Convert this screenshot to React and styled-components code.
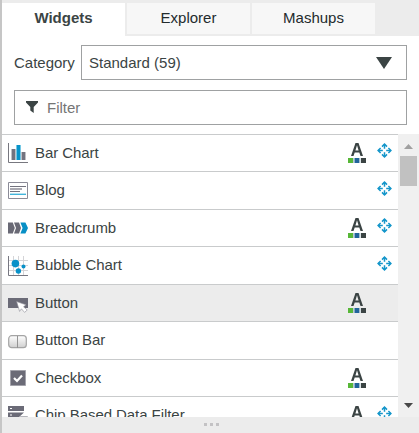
import React from "react";
import styled, { createGlobalStyle } from "styled-components";

const GlobalStyle = createGlobalStyle`
  * { box-sizing: border-box; }
  body { margin: 0; background: #fff; overflow: hidden; }
`;

const Panel = styled.div`
  display: flex;
  flex-direction: column;
  width: 419px;
  height: 433px;
  border-left: 2px solid #c6c6c6;
  background: #fff;
  color: #3b4444;
  font: 15px/20px "Liberation Sans", Arial, sans-serif;
  overflow: hidden;
`;

const TabBar = styled.div`
  display: flex;
  flex: none;
  gap: 2px;
  height: 36px;
  padding-top: 3px;
  background: #ececec;
`;

const Tab = styled.div`
  width: 123px;
  height: ${(p) => (p.$active ? 33 : 31)}px;
  padding-top: 5px;
  text-align: center;
  color: ${(p) => (p.$active ? "#3b4444" : "#232b2d")};
  font-weight: ${(p) => (p.$active ? 700 : 400)};
  background: ${(p) => (p.$active ? "#fff" : "#f7f7f7")};
`;

const Controls = styled.div`
  display: flex;
  flex-direction: column;
  flex: none;
  gap: 10px;
  height: 98px;
  padding: 9px 12px 0 12px;
`;

const CategoryRow = styled.div`
  display: flex;
  align-items: center;
`;

const Label = styled.span`
  width: 67px;
`;

const Field = styled.div`
  display: flex;
  align-items: center;
  flex: 1;
  height: 35px;
  border: 1px solid #9fa1a2;
  background: #fff;
`;

const Select = styled(Field)`
  justify-content: space-between;
  padding: 0 14px 0 7px;
`;

const FilterField = styled(Field)`
  flex: none;
  gap: 9px;
  padding: 0 11px;
  color: #757575;

  svg { margin-top: -2px; }
  span { padding-top: 1px; }
`;

const ListArea = styled.div`
  display: flex;
  flex: none;
  height: 283px;
  overflow: hidden;
`;

const List = styled.div`
  flex: none;
  width: 396px;
`;

const Row = styled.div`
  display: grid;
  grid-template-columns: 20px 1fr 18px 19px;
  column-gap: 7px;
  height: ${(p) => (p.$tall ? 38 : 37)}px;
  padding: 0 6px;
  border-top: 1px solid #c9cbcc;
  background: ${(p) => (p.$selected ? "#ececec" : "#fff")};
`;

const Name = styled.span`
  padding-top: 8px;
  letter-spacing: -0.06px;
  white-space: nowrap;
`;

const IconCell = styled.span`
  display: block;
  height: 20px;
  margin-top: ${(p) => p.$top}px;
  svg { display: block; }
`;

const MarkCell = styled.span`
  margin-top: ${(p) => p.$top}px;
  svg { display: block; }
`;

const MoveCell = styled(MarkCell)`
  margin-left: 4px;
`;

const ScrollBar = styled.div`
  display: flex;
  flex-direction: column;
  align-items: center;
  flex: 1;
  height: 283px;
  padding: 10px 0 9px;
  background: #f0f0f0;
  svg { display: block; flex: none; }
`;

const Thumb = styled.div`
  width: 17px;
  height: 30px;
  margin: 7px 0 auto;
  background: #c1c1c1;
`;

const Footer = styled.div`
  display: flex;
  justify-content: center;
  flex: none;
  gap: 3px;
  height: 16px;
  padding: 6px 0 0 2px;
  background: #ececec;
`;

const Dot = styled.i`
  width: 3px;
  height: 3px;
  background: #c3c2c4;
`;

const BarChart = () => (
  <svg width="20" height="20">
    <path d="M.5 0v19.5H20" fill="none" stroke="#77777f" />
    <path d="M3 6h5v11H3zM13 9h5v8h-5z" fill="#bfc0c5" />
    <path d="M4 6h3v11H4zM14 9h3v8h-3z" fill="#73737f" />
    <path d="M8 2h5v15H8z" fill="#75c8e5" />
    <path d="M9 2h3v15H9z" fill="#0793c9" />
  </svg>
);

const Blog = () => (
  <svg width="20" height="17">
    <path d="M.5.5h19v16H.5z" fill="#fff" stroke="#8b8b97" />
    <path d="M2 4.5h16M2 9.5h10" stroke="#73737f" />
    <path d="M2 7h12" stroke="#aaa9b1" strokeWidth="2" />
    <path d="M2 12.3h16" stroke="#42b5dc" strokeWidth="1.4" />
  </svg>
);

const Breadcrumb = () => (
  <svg width="20" height="12">
    <path d="M0 .5h4.8L6.8 6l-2 5.5H0z" fill="#696975" />
    <path d="M6 .5h5L13 6l-2 5.5H6L8 6z" fill="#696975" />
    <path d="M12.4.5h5L20 6l-2.6 5.5h-5l2.2-5.5z" fill="#078fc5" />
  </svg>
);

const Bubble = () => (
  <svg width="20" height="20">
    <path d="M5.5 0v19M10.5 0v19M15.5 0v19M1 4.5h19M1 9.5h19M1 14.5h19" stroke="#d4d4d7" />
    <path d="M.5 0v19.5H20" fill="none" stroke="#777781" />
    <g fill="#0891c8">
      <circle cx="7.4" cy="7.6" r="3.8" />
      <circle cx="15.5" cy="10.5" r="2" />
      <circle cx="10.4" cy="15" r="2.7" />
    </g>
  </svg>
);

const Cursor = () => (
  <svg width="20" height="15">
    <path d="M0 0h20v10H0z" fill="#6b6b77" />
    <path d="M8.6 3.6l9.4 3.2-2.4 2 3.6 3.2-2.6 2.4-3.2-3.6-1.8 2.6z" fill="#fff" stroke="#8b8b95" strokeWidth=".6" />
  </svg>
);

const ButtonBar = () => (
  <svg width="20" height="14">
    <defs>
      <linearGradient id="metal" x2="0" y2="1">
        <stop offset="0" stopColor="#fff" />
        <stop offset="1" stopColor="#cfcfcf" />
      </linearGradient>
    </defs>
    <rect x=".7" y=".7" width="17.6" height="12" rx="3" fill="url(#metal)" stroke="#a4a4a4" strokeWidth="1.2" />
    <path d="M9.5 1v12" stroke="#949494" />
  </svg>
);

const Checkbox = () => (
  <svg width="20" height="16">
    <path d="M2.5.5h15v15h-15z" fill="#6b6b77" stroke="#a3a3ab" />
    <path d="M6 8l3 3 5-5.5" fill="none" stroke="#fff" strokeWidth="2.2" />
  </svg>
);

const Chips = () => (
  <svg width="20" height="20">
    <path d="M0 0h16v5H0zM0 6.5h16l-6 5.5H0zM0 14h10v5H0z" fill="#6b6b77" />
    <path d="M2 2h2v1H2zM2 8.5h2v1H2z" fill="#fff" />
    <path d="M12 10.5h8l-4 4.5v4h-2v-4z" fill="#6b6b77" />
  </svg>
);

const StyleMark = () => (
  <svg width="18" height="20">
    <path d="M3 13L7.5 0h3L15 13h-2.5l-1.2-3.5H6.7L5.5 13zm4.4-5.6h3.2L9 2.3z" fill="#3b4444" />
    <path d="M0 15h5v5H0z" fill="#57b738" />
    <path d="M6.5 15h5v5h-5z" fill="#22649b" />
    <path d="M13 15h5v5h-5z" fill="#3b4444" />
    <path d="M5.5 15v5M12 15v5" stroke="#b9cbd2" />
  </svg>
);

const Move = () => (
  <svg width="15" height="15">
    <g fill="none" stroke="#1596ca" strokeWidth="1.5">
      <path d="M7.5 1v4.8M7.5 9.2V14M1 7.5h4.8M9.2 7.5H14" />
      <path d="M5 3.6L7.5 1.1 10 3.6M5 11.4l2.5 2.5 2.5-2.5M3.6 5L1.1 7.5 3.6 10M11.4 5l2.5 2.5-2.5 2.5" />
    </g>
  </svg>
);

const Triangle = ({ up }) => (
  <svg width="9" height="5">
    <path d={up ? "M0 5l4.5-5L9 5z" : "M0 0h9L4.5 5z"} fill={up ? "#a0a0a0" : "#484848"} />
  </svg>
);

const widgets = [
  { name: "Bar Chart", Icon: BarChart, top: 8, styled: true, move: true },
  { name: "Blog", Icon: Blog, top: 10, move: true },
  { name: "Breadcrumb", Icon: Breadcrumb, top: 12, styled: true, move: true },
  { name: "Bubble Chart", Icon: Bubble, top: 9, move: true },
  { name: "Button", Icon: Cursor, top: 13, styled: true, selected: true },
  { name: "Button Bar", Icon: ButtonBar, top: 13 },
  { name: "Checkbox", Icon: Checkbox, top: 10, styled: true },
  { name: "Chip Based Data Filter", Icon: Chips, top: 9, styled: true, move: true },
];

export default function App() {
  return (
    <>
      <GlobalStyle />
      <Panel>
        <TabBar>
          <Tab $active>Widgets</Tab>
          <Tab>Explorer</Tab>
          <Tab>Mashups</Tab>
        </TabBar>
        <Controls>
          <CategoryRow>
            <Label>Category</Label>
            <Select>
              <span>Standard (59)</span>
              <svg width="16" height="12"><path d="M0 0h16L8 12z" fill="#3b4444" /></svg>
            </Select>
          </CategoryRow>
          <FilterField>
            <svg width="12" height="12"><path d="M0 0h12v1.5L7.7 6v6L4.3 9.5V6L0 1.5z" fill="#3b4444" /></svg>
            <span>Filter</span>
          </FilterField>
        </Controls>
        <ListArea>
          <List>
            {widgets.map(({ name, Icon, top, styled: themed, move, selected }, i) => (
              <Row key={name} $tall={i % 2 === 1} $selected={selected}>
                <IconCell $top={top}><Icon /></IconCell>
                <Name>{name}</Name>
                <MarkCell $top={i % 2 ? 9 : 8}>{themed && <StyleMark />}</MarkCell>
                <MoveCell $top={i % 2 ? 9 : 8}>{move && <Move />}</MoveCell>
              </Row>
            ))}
          </List>
          <ScrollBar>
            <Triangle up />
            <Thumb />
            <Triangle />
          </ScrollBar>
        </ListArea>
        <Footer><Dot /><Dot /><Dot /></Footer>
      </Panel>
    </>
  );
}
